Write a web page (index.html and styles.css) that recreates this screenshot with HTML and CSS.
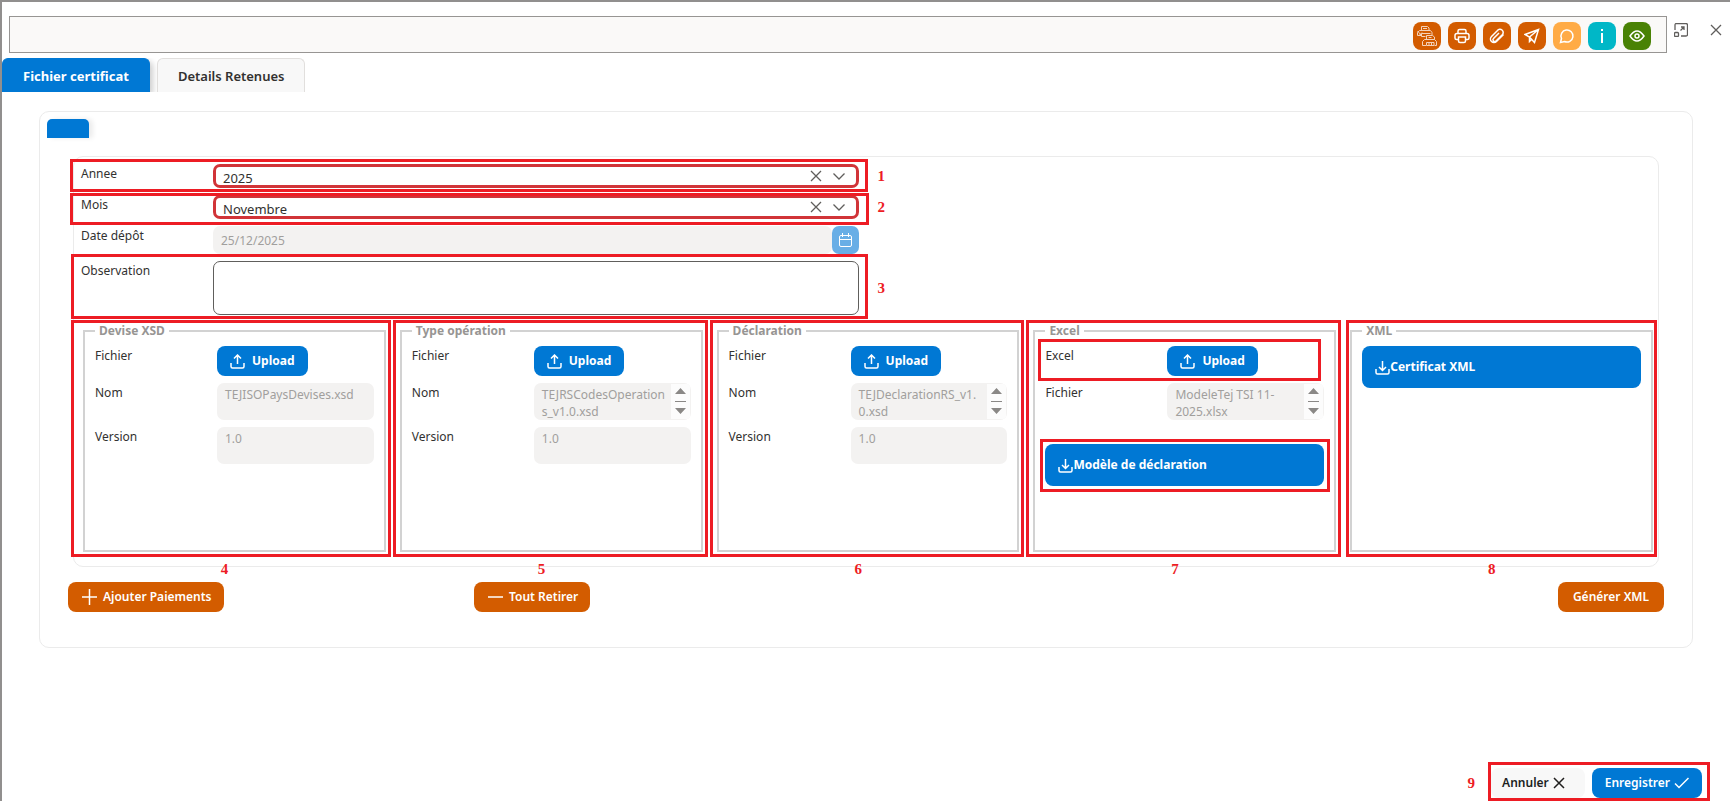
FILE: index.html
```html
<!DOCTYPE html>
<html lang="fr">
<head>
    <meta charset="UTF-8">
    <meta name="viewport" content="width=device-width, initial-scale=1.0">
    <title>Fichier certificat</title>
    <link rel="stylesheet" href="styles.css">
</head>
<body>
    <svg class="symbols" aria-hidden="true">
        <symbol id="upload" viewBox="0 0 15 15">
            <path d="M1 9v3.5q0 1.5 1.500 1.500h10q1.500 0 1.500-1.500V9M7.500 10V1.500M4 4.500l3.500-3.500L11 4.500"/>
        </symbol>
        <symbol id="download" viewBox="0 0 15 15">
            <path d="M1 9v3.500q0 1.500 1.500 1.500h10q1.500 0 1.500-1.500V9M7.500 1v9.500M4 7l3.500 3.500L11 7"/>
        </symbol>
        <symbol id="cross" viewBox="0 0 12 12">
            <path d="M1 1l10 10M11 1L1 11"/>
        </symbol>
        <symbol id="chevron" viewBox="0 0 12 12">
            <path d="M0.500 3.500L6 9l5.500-5.500"/>
        </symbol>
        <symbol id="printer" viewBox="0 0 16 16">
            <path d="M4 5.500V3q0-1.500 1.500-1.500h5q1.500 0 1.500 1.500v2.500M4 11.500H2.500Q1 11.500 1 10V7.500Q1 5.500 3 5.500h10q2 0 2 2V10q0 1.500-1.500 1.500H12M4.500 9h7v4q0 1.500-1.500 1.500H6Q4.500 14.500 4.500 13z"/>
        </symbol>
    </svg>

    <div class="dialog">
        <div class="header">
            <div class="toolbar">
                <button type="button" class="tool" aria-label="Imprimer tout">
                    <svg width="20" height="20" viewBox="0 0 20 20" class="thin">
                        <path d="M4.500 4.500V0.500h6l1.500 1.500v2.500M6 2.500h4M8.500 10.500H4.500v-3h9M4.500 9.500h-4v-3l2-2h11l1.500 2v2.500M0.500 5l4 4.500M2 9.500l3-3"/>
                        <path d="M9.500 13.500v-4h6l2 1.500v2.500M11.500 11.500h3M5.500 19.500v-4l2-2h10l2 2v4h-2M5.500 19.500h3.500M9.500 16.500h7.500v3H9.500zM12 17v2M14.500 17v2"/>
                    </svg>
                </button>
                <button type="button" class="tool" aria-label="Imprimer">
                    <svg width="16" height="16"><use href="#printer"/></svg>
                </button>
                <button type="button" class="tool" aria-label="Joindre">
                    <svg width="16" height="16" viewBox="0 0 16 16">
                        <path d="M14.500 6.500l-7 7a3.500 3.500 0 0 1-5-5l6-6a3 3 0 0 1 5 4l-6.500 6.500a1.500 1.500 0 0 1-2.500-2.500l5.500-5.500"/>
                    </svg>
                </button>
                <button type="button" class="tool" aria-label="Envoyer">
                    <svg width="16" height="16" viewBox="0 0 16 16">
                        <path d="M14.500 1.500L1 6.500l4.500 2.500 5 5.500zM5.500 9v4.500l2-2M5.500 9l9-7.500"/>
                    </svg>
                </button>
                <button type="button" class="tool tool-comment" aria-label="Commentaire">
                    <svg width="16" height="16" viewBox="0 0 16 16">
                        <path d="M1.500 14.500l1-4a6 6 0 1 1 3 3z"/>
                    </svg>
                </button>
                <button type="button" class="tool tool-info" aria-label="Information">
                    <svg width="16" height="16" viewBox="0 0 16 16" class="thick">
                        <path d="M8 1v2M8 5v10"/>
                    </svg>
                </button>
                <button type="button" class="tool tool-view" aria-label="Afficher">
                    <svg width="16" height="16" viewBox="0 0 16 16">
                        <path d="M1 8q7-10 14 0q-7 10-14 0z"/>
                        <circle cx="8" cy="8" r="2"/>
                    </svg>
                </button>
            </div>
            <button type="button" class="window-btn" aria-label="Agrandir">
                <svg width="14" height="14" viewBox="0 0 14 14">
                    <path d="M1 7V2q0-1.500 1.500-1.500h9.500q1.500 0 1.500 1.500v9.500q0 1.500-1.500 1.500H7M6.500 7.500L10 4M7 4h3v3"/>
                    <rect x="0.500" y="9.500" width="4" height="4" rx="1"/>
                </svg>
            </button>
            <button type="button" class="window-btn" aria-label="Fermer">
                <svg width="12" height="12"><use href="#cross"/></svg>
            </button>
        </div>

        <div class="tabs" role="tablist">
            <button type="button" class="tab active" role="tab" aria-selected="true">Fichier certificat</button>
            <button type="button" class="tab" role="tab" aria-selected="false">Details Retenues</button>
        </div>

        <div class="panel">
            <div class="subtab"></div>
            <div class="content">
                <div class="form">
                    <div class="row">
                        <label for="annee">Annee</label>
                        <div class="combo">
                            <select id="annee"><option>2025</option></select>
                            <svg class="clear" width="12" height="12"><use href="#cross"/></svg>
                            <svg class="arrow" width="12" height="12"><use href="#chevron"/></svg>
                        </div>
                        <div class="callout"></div>
                        <span class="mark side">1</span>
                    </div>
                    <div class="row">
                        <label for="mois">Mois</label>
                        <div class="combo">
                            <select id="mois"><option>Novembre</option></select>
                            <svg class="clear" width="12" height="12"><use href="#cross"/></svg>
                            <svg class="arrow" width="12" height="12"><use href="#chevron"/></svg>
                        </div>
                        <div class="callout low"></div>
                        <span class="mark side">2</span>
                    </div>
                    <div class="row">
                        <label for="depot">Date dépôt</label>
                        <div class="date">
                            <input type="text" id="depot" value="25/12/2025" disabled>
                            <button type="button" disabled aria-label="Calendrier">
                                <svg width="13" height="14" viewBox="0 0 13 14">
                                    <path d="M2 2.500h9q1.500 0 1.500 1.500v8q0 1.500-1.500 1.500H2Q0.500 13.500 0.500 12V4q0-1.500 1.500-1.500zM0.500 6.500h12M3.500 0v4M9.500 0v4"/>
                                </svg>
                            </button>
                        </div>
                    </div>
                    <div class="row">
                        <label for="observation">Observation</label>
                        <textarea id="observation" class="observation"></textarea>
                        <div class="callout tall"></div>
                        <span class="mark side">3</span>
                    </div>
                </div>

                <div class="groups">
                    <div class="group">
                        <fieldset>
                            <legend>Devise XSD</legend>
                            <div class="field">
                                <label for="up1">Fichier</label>
                                <button type="button" id="up1" class="btn upload"><svg width="15" height="15"><use href="#upload"/></svg>Upload</button>
                            </div>
                            <div class="field">
                                <label for="nom1">Nom</label>
                                <div class="area"><textarea id="nom1" disabled>TEJISOPaysDevises.xsd</textarea></div>
                            </div>
                            <div class="field">
                                <label for="ver1">Version</label>
                                <div class="area"><textarea id="ver1" disabled>1.0</textarea></div>
                            </div>
                        </fieldset>
                        <div class="callout"></div>
                        <span class="mark below">4</span>
                    </div>
                    <div class="group">
                        <fieldset>
                            <legend>Type opération</legend>
                            <div class="field">
                                <label for="up2">Fichier</label>
                                <button type="button" id="up2" class="btn upload"><svg width="15" height="15"><use href="#upload"/></svg>Upload</button>
                            </div>
                            <div class="field">
                                <label for="nom2">Nom</label>
                                <div class="area scroll">
                                    <textarea id="nom2" disabled>TEJRSCodesOperations_v1.0.xsd</textarea>
                                    <svg width="19" height="35" viewBox="0 0 19 35"><path d="M4 10h11L9.500 4zM4 17h11v1H4zM4 24h11l-5.500 6z"/></svg>
                                </div>
                            </div>
                            <div class="field">
                                <label for="ver2">Version</label>
                                <div class="area"><textarea id="ver2" disabled>1.0</textarea></div>
                            </div>
                        </fieldset>
                        <div class="callout"></div>
                        <span class="mark below">5</span>
                    </div>
                    <div class="group">
                        <fieldset>
                            <legend>Déclaration</legend>
                            <div class="field">
                                <label for="up3">Fichier</label>
                                <button type="button" id="up3" class="btn upload"><svg width="15" height="15"><use href="#upload"/></svg>Upload</button>
                            </div>
                            <div class="field">
                                <label for="nom3">Nom</label>
                                <div class="area scroll">
                                    <textarea id="nom3" disabled>TEJDeclarationRS_v1.0.xsd</textarea>
                                    <svg width="19" height="35" viewBox="0 0 19 35"><path d="M4 10h11L9.500 4zM4 17h11v1H4zM4 24h11l-5.500 6z"/></svg>
                                </div>
                            </div>
                            <div class="field">
                                <label for="ver3">Version</label>
                                <div class="area"><textarea id="ver3" disabled>1.0</textarea></div>
                            </div>
                        </fieldset>
                        <div class="callout"></div>
                        <span class="mark below">6</span>
                    </div>
                    <div class="group">
                        <fieldset>
                            <legend>Excel</legend>
                            <div class="field">
                                <label for="up4">Excel</label>
                                <button type="button" id="up4" class="btn upload"><svg width="15" height="15"><use href="#upload"/></svg>Upload</button>
                                <div class="callout inner"></div>
                            </div>
                            <div class="field">
                                <label for="nom4">Fichier</label>
                                <div class="area scroll">
                                    <textarea id="nom4" disabled>ModeleTej TSI 11-2025.xlsx</textarea>
                                    <svg width="19" height="35" viewBox="0 0 19 35"><path d="M4 10h11L9.500 4zM4 17h11v1H4zM4 24h11l-5.500 6z"/></svg>
                                </div>
                            </div>
                            <div class="download-row spaced">
                                <button type="button" class="btn download"><svg width="15" height="15"><use href="#download"/></svg>Modèle de déclaration</button>
                                <div class="callout around"></div>
                            </div>
                        </fieldset>
                        <div class="callout"></div>
                        <span class="mark below">7</span>
                    </div>
                    <div class="group">
                        <fieldset>
                            <legend>XML</legend>
                            <div class="download-row">
                                <button type="button" class="btn download"><svg width="15" height="15"><use href="#download"/></svg>Certificat XML</button>
                            </div>
                        </fieldset>
                        <div class="callout last"></div>
                        <span class="mark below">8</span>
                    </div>
                </div>
            </div>

            <div class="actions">
                <button type="button" class="btn orange"><svg width="15" height="16" viewBox="0 0 15 16"><path d="M7.500 0v16M0 8h15"/></svg>Ajouter Paiements</button>
                <button type="button" class="btn orange"><svg width="15" height="16" viewBox="0 0 15 16"><path d="M0 8h15"/></svg>Tout Retirer</button>
                <button type="button" class="btn orange generate">Générer XML</button>
            </div>
        </div>

        <div class="footer">
            <span class="mark">9</span>
            <div class="footer-btns">
                <button type="button" class="btn cancel">Annuler<svg width="12" height="12"><use href="#cross"/></svg></button>
                <button type="button" class="btn save">Enregistrer<svg width="15" height="12" viewBox="0 0 15 12"><path d="M1 6.500l4 4L14.500 1"/></svg></button>
                <div class="callout"></div>
            </div>
        </div>
    </div>
</body>
</html>
```
FILE: styles.css
```css
*{
    box-sizing: border-box;
}
body{
    margin: 0;
    padding: 2px 0 0 2px;
    min-height: 100vh;
    display: flex;
    background: #918f8e;
    font-family: "Noto Sans", "Open Sans", sans-serif;
    font-size: 12px;
    line-height: 18px;
    color: #323130;
}
button, input, select, textarea{
    font: inherit;
    color: inherit;
    margin: 0;
}
button{
    border: none;
    padding: 0;
    background: none;
}
label{
    line-height: 20px;
}
svg{
    display: block;
    flex: none;
    fill: none;
    stroke: currentColor;
}
.symbols{
    position: absolute;
    width: 0;
    height: 0;
}
.dialog{
    flex: 1;
    min-width: 0;
    display: flex;
    flex-direction: column;
    background: #fff;
}

/* header */
.header{
    display: flex;
    padding: 14px 8px 5px 7px;
    color: #605e5c;
}
.toolbar{
    flex: 1;
    display: flex;
    justify-content: flex-end;
    gap: 7px;
    height: 37px;
    margin-right: 7px;
    padding: 5px 15px 0 0;
    border: 1px solid #979593;
    background: #faf9f8;
}
.tool{
    display: flex;
    align-items: center;
    justify-content: center;
    width: 28px;
    height: 28px;
    border-radius: 8px;
    background: #d35c00;
    color: #fff;
}
.tool svg{
    stroke-width: 1.5;
}
.tool .thin{
    stroke-width: 1;
    color: #f4d3bb;
}
.tool .thick{
    stroke-width: 2;
}
.tool-comment{
    background: #ffab46;
}
.tool-info{
    background: #00b7c7;
}
.tool-view{
    background: #498205;
}
.window-btn{
    display: flex;
    justify-content: center;
    height: 28px;
    padding-top: 7px;
}
.window-btn svg{
    stroke-width: 1.3;
}
.window-btn + .window-btn{
    margin-left: 22px;
    padding-top: 8px;
}

/* tabs */
.tabs{
    display: flex;
    gap: 7px;
    height: 34px;
    overflow: hidden;
}
.tab{
    padding: 0 20px;
    border: 1px solid #e1dfdd;
    border-bottom: none;
    border-radius: 6px 6px 0 0;
    background: #f8f8f8;
    font-size: 13px;
    font-weight: 600;
}
.tab.active{
    border-color: #0078d4;
    background: #0078d4;
    color: #fff;
    font-weight: 700;
    box-shadow: 3px 3px 6px rgba(0,0,0,.2);
}

/* main panel */
.panel{
    margin: 19px 37px 0;
    padding: 7px 28px 35px;
    border: 1px solid #ebebeb;
    border-radius: 10px;
}
.subtab{
    width: 42px;
    height: 19px;
    margin-left: -21px;
    border-radius: 5px 5px 0 0;
    background: #0078d4;
    box-shadow: 4px 0 5px rgba(0,0,0,.08);
}
.content{
    margin: 18px 5px 15px;
    padding: 7px 5px 14px 7px;
    border: 1px solid #ebebeb;
    border-radius: 10px;
}
.form{
    display: flex;
    flex-direction: column;
    gap: 7px;
    width: calc(50% - 8px);
}
.row{
    position: relative;
    display: grid;
    grid-template-columns: 132px 1fr;
    align-items: start;
}
.combo{
    position: relative;
}
.combo select{
    display: block;
    width: 100%;
    height: 24px;
    padding: 4px 50px 0 7px;
    border: 3px solid #d13438;
    border-radius: 7px;
    background: #fff;
    appearance: none;
    font-size: 13px;
    line-height: 15px;
}
.combo svg{
    position: absolute;
    top: 6px;
    right: 37px;
    color: #605e5c;
    stroke-width: 1.3;
}
.combo .arrow{
    right: 14px;
}
.date{
    display: flex;
}
.date input{
    flex: 1;
    min-width: 0;
    height: 28px;
    padding: 0 8px;
    border: none;
    border-radius: 7px;
    background: #f3f2f1;
    color: #a19f9d;
}
.date button{
    display: flex;
    align-items: center;
    justify-content: center;
    width: 27px;
    height: 28px;
    border-radius: 7px;
    background: #68aee6;
    color: #fff;
}
.observation{
    display: block;
    width: 100%;
    height: 54px;
    border: 1px solid #605e5c;
    border-radius: 7px;
    resize: none;
}

/* groups */
.groups{
    display: grid;
    grid-template-columns: repeat(5, 1fr);
    gap: 14px;
    margin-top: 7px;
    padding-left: 2px;
}
.group{
    position: relative;
    min-width: 0;
}
fieldset{
    height: 230px;
    min-width: 0;
    margin: 0;
    padding: 6px 10px 0;
    border: 2px solid #d2d2d2;
}
legend{
    padding: 0 4px;
    color: #979593;
    font-weight: 700;
}
.field{
    position: relative;
    display: grid;
    grid-template-columns: 122px 1fr;
    align-items: start;
    margin-bottom: 7px;
}
.area{
    position: relative;
    height: 37px;
    border-radius: 7px;
    background: #f3f2f1;
    overflow: hidden;
}
.area textarea{
    display: block;
    width: 100%;
    height: 37px;
    padding: 3px 8px 0;
    border: none;
    background: none;
    color: #a19f9d;
    line-height: 17px;
    word-break: break-word;
    resize: none;
    overflow: hidden;
}
.scroll textarea{
    padding-right: 25px;
}
.scroll svg{
    position: absolute;
    top: 1px;
    right: 1px;
    background: #fcfcfc;
    fill: #8a8886;
    stroke: none;
}
.btn{
    display: flex;
    align-items: center;
    gap: 6px;
    height: 30px;
    padding: 0 13px;
    border-radius: 8px;
    background: #0078d4;
    color: #fff;
    font-weight: 600;
    white-space: nowrap;
}
.upload{
    justify-self: start;
    gap: 7px;
}
.upload, .download{
    font-weight: 700;
}
.upload svg, .download svg, .footer svg{
    stroke-width: 1.5;
}
.download-row{
    position: relative;
}
.spaced{
    margin-top: 24px;
}
.download{
    width: 100%;
    height: 42px;
    gap: 0;
}

/* actions */
.actions{
    display: grid;
    grid-template-columns: repeat(4, 1fr);
    gap: 28px;
}
.orange{
    justify-self: start;
    padding: 0 12px 0 14px;
    background: #d35c00;
}
.actions svg{
    stroke-width: 1.5;
}
.generate{
    grid-column: 4;
    justify-self: end;
    padding: 0 15px;
}

/* footer */
.footer{
    display: flex;
    align-items: center;
    justify-content: flex-end;
    gap: 16px;
    margin-top: auto;
    padding: 0 28px 3px 0;
}
.footer-btns{
    position: relative;
    display: flex;
    gap: 7px;
}
.footer .btn{
    gap: 4px;
}
.cancel{
    padding: 0 20px 0 11px;
    background: #f8f8f8;
    color: #201f1e;
}

/* numbered frames */
.callout{
    position: absolute;
    inset: -5px -9px -4px -11px;
    border: 3px solid #ed1c24;
    pointer-events: none;
}
.callout.low{
    inset: -2px -10px -6px -11px;
}
.callout.tall{
    inset: -7px -9px -4px -10px;
}
.group .callout{
    inset: -2px -5px -5px -7px;
}
.group:first-child .callout{
    left: -12px;
}
.group .callout.last{
    right: -4px;
    left: -4px;
}
.group .callout.inner{
    inset: -7px 3px -5px -7px;
}
.group .callout.around{
    inset: -5px -6px -6px -5px;
}
.footer .callout{
    inset: -6px -8px -3px -3px;
}
.mark{
    color: #ed1c24;
    font-family: "Liberation Serif", serif;
    font-size: 15px;
    font-weight: 700;
}
.side{
    position: absolute;
    top: calc(50% - 9px);
    right: -26px;
}
.below{
    position: absolute;
    right: 52%;
    bottom: -26px;
}
```
